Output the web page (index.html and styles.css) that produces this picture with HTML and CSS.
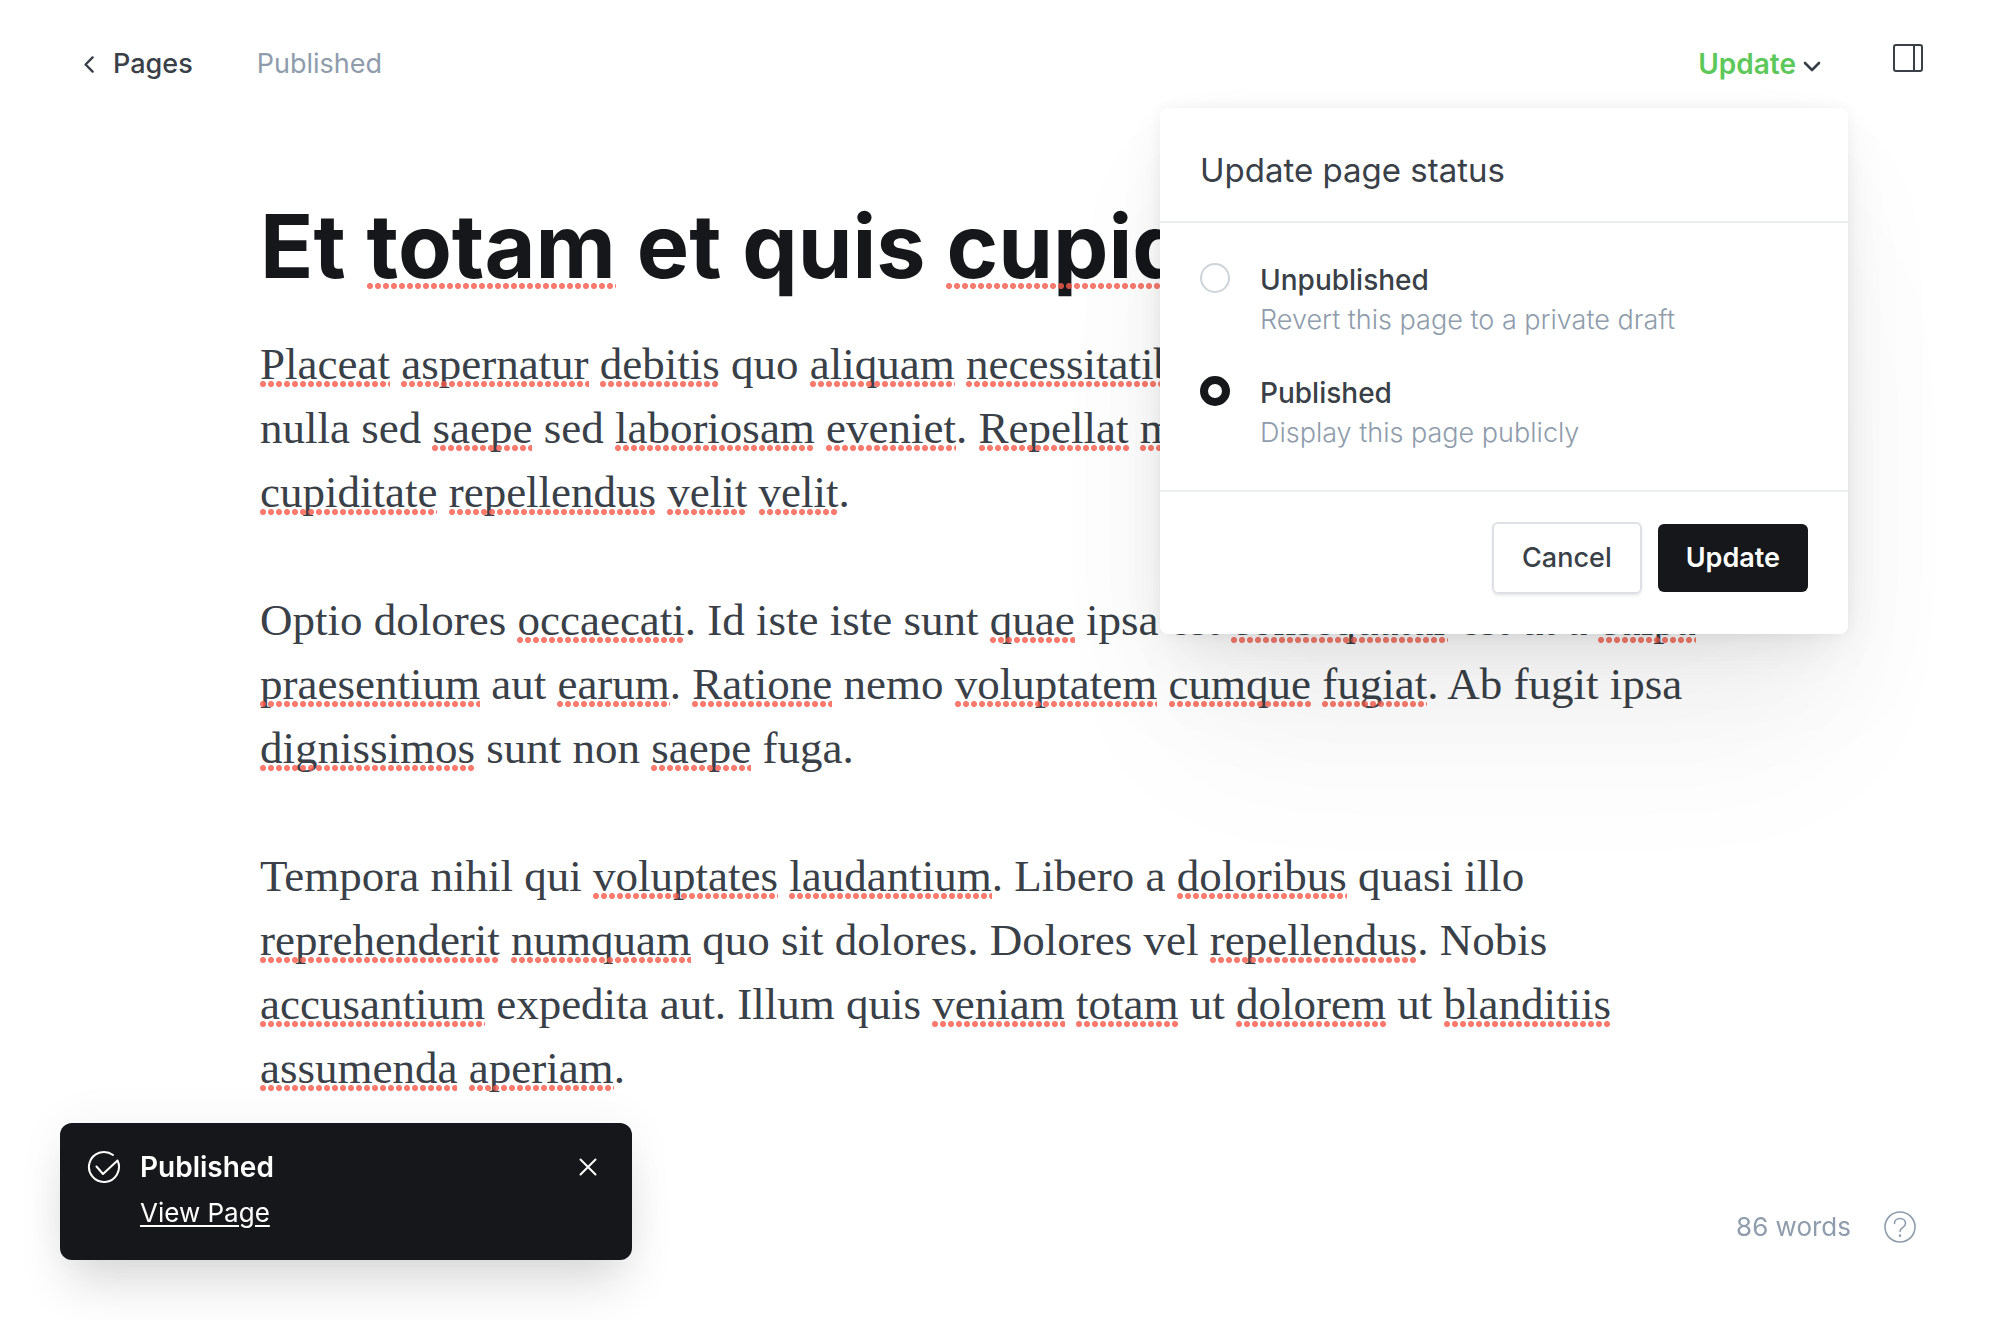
FILE: index.html
```html
<!DOCTYPE html>
<html lang="en">
<head>
<meta charset="utf-8">
<title>Page editor</title>
<link rel="stylesheet" href="styles.css">
</head>
<body>
<div class="editor">
  <header class="topbar">
    <nav class="crumbs">
      <a class="back" href="#">
        <svg class="back-icon" width="10" height="17" viewBox="0 0 10 17" fill="none" stroke="currentColor" stroke-width="2.4" stroke-linecap="round" stroke-linejoin="round"><path d="M8.6 1.4 1.6 8.5l7 7.1"/></svg>
        Pages
      </a>
      <span class="status">Published</span>
    </nav>
    <div class="actions">
      <div class="publish">
        <button class="publish-trigger" type="button" aria-expanded="true">Update
          <svg class="chevron" width="18" height="11" viewBox="0 0 18 11" fill="none" stroke="currentColor" stroke-width="2.6" stroke-linecap="round" stroke-linejoin="round"><path d="M2 2l7 7 7-7"/></svg>
        </button>
        <form class="menu">
          <h2 class="menu-title">Update page status</h2>
          <div class="menu-options">
            <label class="option">
              <input class="radio" type="radio" name="status">
              <span class="option-text"><span class="option-name">Unpublished</span><span class="option-note">Revert this page to a private draft</span></span>
            </label>
            <label class="option">
              <input class="radio" type="radio" name="status" checked>
              <span class="option-text"><span class="option-name">Published</span><span class="option-note">Display this page publicly</span></span>
            </label>
          </div>
          <div class="menu-footer">
            <button class="btn btn-outline" type="button">Cancel</button>
            <button class="btn btn-dark" type="button">Update</button>
          </div>
        </form>
      </div>
      <button class="icon-btn" type="button" aria-label="Settings">
        <svg width="32" height="28" viewBox="0 0 32 28" fill="none" stroke="currentColor" stroke-width="2"><rect x="2" y="1" width="28" height="26" rx="2"/><path d="M22 1v26"/></svg>
      </button>
    </div>
  </header>

  <main class="content">
    <h1 class="title">Et <span class="sp">totam</span> et quis <span class="sp">cupiditate</span></h1>
    <div class="body">
      <p><span class="sp">Placeat</span> <span class="sp">aspernatur</span> <span class="sp">debitis</span> quo <span class="sp">aliquam</span> <span class="sp">necessitatibus</span> et<br>nulla sed <span class="sp">saepe</span> sed <span class="sp">laboriosam</span> <span class="sp">eveniet</span>. <span class="sp">Repellat</span> <span class="sp">minima</span><br><span class="sp">cupiditate</span> <span class="sp">repellendus</span> <span class="sp">velit</span> <span class="sp">velit</span>.</p>
      <p>Optio dolores <span class="sp">occaecati</span>. Id iste iste sunt <span class="sp">quae</span> ipsa est <span class="sp">consequatur</span> est ut a <span class="sp">culpa</span><br><span class="sp">praesentium</span> aut <span class="sp">earum</span>. <span class="sp">Ratione</span> nemo <span class="sp">voluptatem</span> <span class="sp">cumque</span> <span class="sp">fugiat</span>. Ab fugit ipsa<br><span class="sp">dignissimos</span> sunt non <span class="sp">saepe</span> fuga.</p>
      <p>Tempora nihil qui <span class="sp">voluptates</span> <span class="sp">laudantium</span>. Libero a <span class="sp">doloribus</span> quasi illo<br><span class="sp">reprehenderit</span> <span class="sp">numquam</span> quo sit dolores. Dolores vel <span class="sp">repellendus</span>. Nobis<br><span class="sp">accusantium</span> expedita aut. Illum quis <span class="sp">veniam</span> <span class="sp">totam</span> ut <span class="sp">dolorem</span> ut <span class="sp">blanditiis</span><br><span class="sp">assumenda</span> <span class="sp">aperiam</span>.</p>
    </div>
  </main>

  <footer class="footer">
    <aside class="toast" role="status">
      <svg class="toast-icon" width="34" height="34" viewBox="0 0 34 34" fill="none" stroke="currentColor" stroke-width="2" stroke-linecap="round" stroke-linejoin="round"><path d="M26 5A15 15 0 1 0 30.5 10.500L16 24l-6.500-7.500"/></svg>
      <div class="toast-text"><strong class="toast-title">Published</strong><a class="toast-link" href="#">View Page</a></div>
      <button class="toast-close" type="button" aria-label="Close">
        <svg width="18" height="18" viewBox="0 0 18 18" fill="none" stroke="currentColor" stroke-width="2" stroke-linecap="round"><path d="M1.500 1.500l15 15M16.500 1.500l-15 15"/></svg>
      </button>
    </aside>
    <div class="meta">
      <span>86 words</span>
      <a class="help" href="#" aria-label="Help">
        <svg width="34" height="34" viewBox="0 0 34 34" fill="none" stroke="currentColor" stroke-width="1.600" stroke-linecap="round"><circle cx="17" cy="17" r="15"/><path d="M11.500 13.500c0-3 2.300-5 5.500-5s5.500 2.100 5.500 5c0 4.200-5.500 3.600-5.500 8"/><path d="M17 25.500v.2" stroke-width="2.400"/></svg>
      </a>
    </div>
  </footer>
</div>
</body>
</html>
```
FILE: styles.css
```css
* { box-sizing: border-box; }
body {
  margin: 0;
  background: #fff;
  color: #394047;
  font-family: Inter, "Liberation Sans", sans-serif;
  font-size: 27px;
  line-height: 40px;
  overflow-x: hidden;
}
button { font: inherit; color: inherit; background: none; border: 0; padding: 0; cursor: pointer; }
a { color: inherit; text-decoration: none; }
svg { display: block; }

.editor { min-height: 100vh; display: flex; flex-direction: column; }

.topbar { display: flex; justify-content: space-between; padding: 44px 76px 0 84px; }
.crumbs { display: flex; gap: 64px; }
.back { display: flex; align-items: center; gap: 19px; font-weight: 500; }
.status { color: #8e9cac; }
.actions { display: flex; gap: 71px; }
.publish { position: relative; }
.publish-trigger { display: flex; align-items: center; gap: 7px; color: #5cc85a; font-size: 28px; font-weight: 600; }
.chevron { color: #394047; margin-top: 5px; }
.icon-btn { align-self: flex-start; }

.menu {
  position: absolute;
  top: 64px;
  right: -27px;
  z-index: 2;
  width: 688px;
  background: #fff;
  border-radius: 8px;
  box-shadow: 0 0 14px rgba(0,0,0,.05), 0 16px 50px -12px rgba(0,0,0,.1), 0 130px 160px -20px rgba(0,0,0,.04), 0 60px 120px rgba(0,0,0,.04);
}
.menu-title { margin: 0; padding: 42px 40px 31px; font-size: 33px; font-weight: 400; line-height: 40px; border-bottom: 2px solid #ebeef0; }
.menu-options { padding: 37px 40px; display: grid; gap: 33px; }
.option { display: flex; gap: 30px; }
.radio {
  appearance: none;
  flex: none;
  width: 30px;
  height: 30px;
  margin: 3px 0 0;
  border: 2px solid #ced4d9;
  border-radius: 50%;
  background: #fff;
}
.radio:checked { border: 8px solid #15171a; }
.option-text { display: grid; }
.option-name { font-size: 28px; font-weight: 500; }
.option-note { color: #8e9cac; font-weight: 300; }
.menu-footer { display: flex; justify-content: flex-end; align-items: center; gap: 16px; padding: 30px 40px 40px; border-top: 2px solid #ebeef0; }
.btn { height: 68px; padding: 0 28px; border-radius: 6px; font-weight: 500; }
.btn-outline { height: 72px; border: 2px solid #dde1e5; box-shadow: 0 2px 3px rgba(0,0,0,.08); }
.btn-dark { background: #15171a; color: #fff; font-weight: 600; }

.content { padding: 104px 260px 0; }
.title { margin: 0; color: #15171a; font-size: 88px; font-weight: 700; line-height: 116px; white-space: nowrap; }
.body { margin-top: 28px; font-family: Georgia, "Liberation Serif", serif; font-size: 45px; line-height: 64px; white-space: nowrap; }
.body p { margin: 0 0 64px; }
.sp { position: relative; }
.sp::after {
  content: "";
  position: absolute;
  left: 0;
  right: 0;
  bottom: 2px;
  height: 6px;
  background: radial-gradient(circle at 3px 3px, rgba(246,90,74,.8) 2.700px, transparent 3.300px) 0 0 / 8px 6px repeat-x;
}
.title .sp::after { bottom: 10px; }

.footer { position: fixed; left: 0; right: 0; bottom: 0; display: flex; justify-content: space-between; align-items: flex-end; padding: 0 83px 60px 60px; }
.toast { display: flex; align-items: flex-start; width: 572px; padding: 24px 35px 27px 27px; border-radius: 12px; background: #15171a; color: #fff; box-shadow: 0 0 50px rgba(0,0,0,.05), 0 30px 50px -8px rgba(0,0,0,.14); }
.toast-icon { margin-top: 3px; }
.toast-text { flex: 1; display: grid; gap: 6px; margin-left: 19px; justify-items: start; }
.toast-title { font-weight: 600; font-size: 28px; }
.toast-link { font-size: 26px; text-decoration: underline; text-underline-offset: 3px; text-decoration-thickness: 2px; }
.toast-close { margin-top: 11px; }
.meta { display: flex; align-items: center; gap: 32px; color: #8e9cac; font-size: 26px; margin-bottom: 13px; }
```
